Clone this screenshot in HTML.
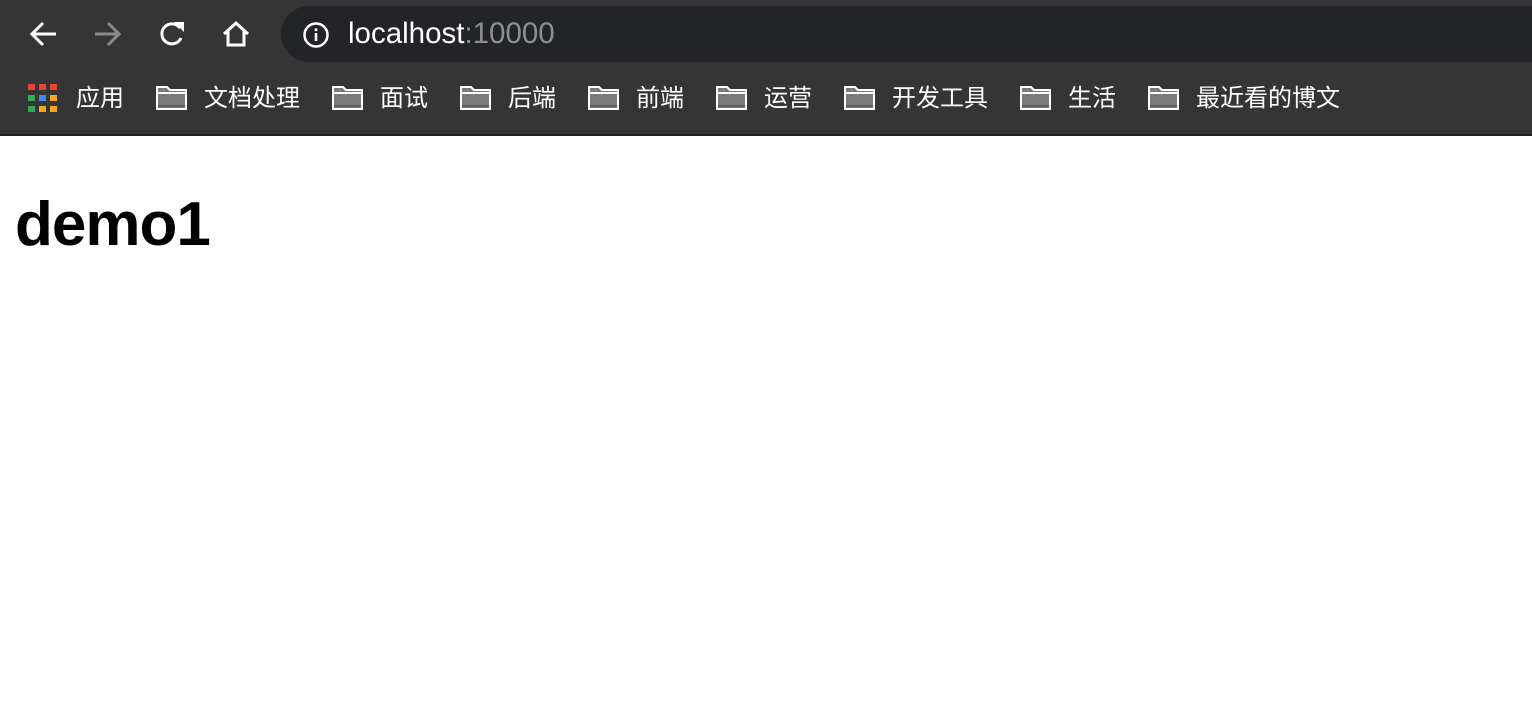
<!DOCTYPE html>
<html><head><meta charset="utf-8"><style>
*{margin:0;padding:0;box-sizing:border-box}
body{width:1532px;height:704px;background:#fff;overflow:hidden;font-family:"Liberation Sans","Noto Sans CJK SC",sans-serif;position:relative}
#bar{position:absolute;left:0;top:0;width:1532px;height:136px;background:#353535;border-bottom:2px solid #1f1f1f}
#omni{position:absolute;left:281px;top:6px;width:1260px;height:56px;background:#232427;border-radius:28px 0 0 28px}
.url{position:absolute;left:348px;top:16px;font-size:29.5px;color:#fff;line-height:36px}
.url span{color:#8e8f91}
.bm{position:absolute;top:83px;font-size:24px;color:#fff;line-height:32px}
svg{position:absolute}
h1{position:absolute;left:15px;top:185px;font-size:62px;font-weight:bold;letter-spacing:-1px;color:#000;line-height:80px}
</style></head><body>
<div id="bar">
<svg style="left:28px;top:20px" width="32" height="28" viewBox="0 0 32 28"><path d="M28 14H5M15 3L4 14l11 11" stroke="#fff" stroke-width="3" fill="none"/></svg>
<svg style="left:92px;top:20px" width="32" height="28" viewBox="0 0 32 28"><path d="M3 14h23M16 3l11 11-11 11" stroke="#8a8a8a" stroke-width="3" fill="none"/></svg>
<svg style="left:156px;top:18px" width="32" height="32" viewBox="0 0 32 32"><path d="M25 20a10 10 0 1 1-1-10" stroke="#fff" stroke-width="3" fill="none"/><path d="M18 4h10v10z" fill="#fff"/></svg>
<svg style="left:220px;top:18px" width="32" height="32" viewBox="0 0 32 32"><path d="M4 16L16 5l12 11M8 13v14h16V13" stroke="#fff" stroke-width="3" fill="none"/></svg>
<div id="omni"></div>
<svg style="left:302px;top:21px" width="28" height="28" viewBox="0 0 28 28"><circle cx="14" cy="14" r="11.5" stroke="#fff" stroke-width="2.5" fill="none"/><rect x="12.7" y="12" width="2.6" height="8" fill="#fff"/><rect x="12.7" y="7.5" width="2.6" height="2.6" fill="#fff"/></svg>
<div class="url">localhost<span>:10000</span></div>
<svg style="left:28px;top:84px" width="30" height="28" viewBox="0 0 30 28">
<rect x="0" y="0" width="7" height="6" fill="#e94235"/><rect x="11" y="0" width="7" height="6" fill="#e94235"/><rect x="22" y="0" width="7" height="6" fill="#e94235"/>
<rect x="0" y="11" width="7" height="6" fill="#34a853"/><rect x="11" y="11" width="7" height="6" fill="#4285f4"/><rect x="22" y="11" width="7" height="6" fill="#f5a623"/>
<rect x="0" y="22" width="7" height="6" fill="#34a853"/><rect x="11" y="22" width="7" height="6" fill="#f5a623"/><rect x="22" y="22" width="7" height="6" fill="#f5a623"/></svg>
<div class="bm" style="left:76px">应用</div>
<div class="bm" style="left:204px">文档处理</div>
<div class="bm" style="left:380px">面试</div>
<div class="bm" style="left:508px">后端</div>
<div class="bm" style="left:636px">前端</div>
<div class="bm" style="left:764px">运营</div>
<div class="bm" style="left:892px">开发工具</div>
<div class="bm" style="left:1068px">生活</div>
<div class="bm" style="left:1196px">最近看的博文</div>
</div>
<svg style="left:0;top:0" width="1532" height="136">
<defs><g id="f"><path d="M1 1h10l3 3h16v19H1z" fill="#7a7a7a" stroke="#fff" stroke-width="2"/><path d="M1 7h29" stroke="#fff" stroke-width="2"/><path d="M2 20h27" stroke="#5e5e5e" stroke-width="2"/></g></defs>
<use href="#f" x="156" y="86"/><use href="#f" x="332" y="86"/><use href="#f" x="460" y="86"/><use href="#f" x="588" y="86"/><use href="#f" x="716" y="86"/><use href="#f" x="844" y="86"/><use href="#f" x="1020" y="86"/><use href="#f" x="1148" y="86"/>
</svg>
<h1>demo1</h1>
</body></html>
